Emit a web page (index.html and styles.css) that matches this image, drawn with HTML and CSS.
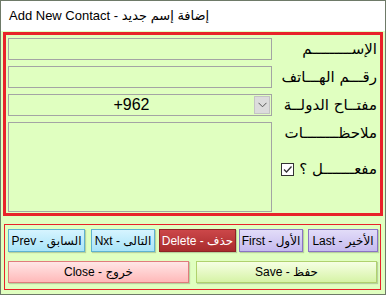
FILE: index.html
```html
<!DOCTYPE html>
<html lang="ar">
<head>
<meta charset="utf-8">
<link rel="stylesheet" href="styles.css">
</head>
<body>
<div class="window">
  <div class="titlebar">Add New Contact - إضافة إسم جديد</div>
  <div class="content">
    <div class="frame">
      <div class="field"><div class="input"></div></div>
      <div class="label">الإســـــــــم</div>

      <div class="field"><div class="input"></div></div>
      <div class="label">رقـــم الهـــاتف</div>

      <div class="field">
        <div class="input select">
          <span class="select-value">+962</span>
          <span class="select-arrow">
            <svg width="9" height="6" viewBox="0 0 9 6"><path d="M0.5 0.8 L4.5 4.8 L8.5 0.8" fill="none" stroke="#555" stroke-width="1"/></svg>
          </span>
        </div>
      </div>
      <div class="label">مفتــاح الدولــة</div>

      <div class="field"><div class="input textarea"></div></div>
      <div class="label-stack">
        <div class="label">ملاحظــــــــات</div>
        <div class="label check-row">
          <span>مفعـــــــل ؟</span>
          <span class="checkbox">
            <svg width="11" height="11" viewBox="0 0 11 11"><path d="M2 5.5 L4.5 8 L9.5 2.5" fill="none" stroke="#333" stroke-width="1.3"/></svg>
          </span>
        </div>
      </div>
    </div>

    <div class="buttons">
      <div class="btn-row">
        <div class="btn blue w-prev">Prev - السابق</div>
        <div class="btn blue w-nxt">Nxt - التالى</div>
        <div class="btn red w-del">Delete - حذف</div>
        <div class="btn purple w-first">First - الأول</div>
        <div class="btn purple w-last">Last - الأخير</div>
      </div>
      <div class="btn-row row2">
        <div class="btn pink w-close">Close - خروج</div>
        <div class="btn green w-save">Save - حفظ</div>
      </div>
    </div>
  </div>
</div>
</body>
</html>
```
FILE: styles.css
```css
* { box-sizing: border-box; }
html, body { margin: 0; padding: 0; }
body {
  width: 386px;
  height: 295px;
  overflow: hidden;
  font-family: "DejaVu Sans", "Liberation Sans", sans-serif;
}
.window {
  width: 386px;
  height: 295px;
  border: 1px solid #6e7a68;
  background: #e0ffc0;
  display: flex;
  flex-direction: column;
}
.titlebar {
  height: 30px;
  background: #ffffff;
  font-family: "Liberation Sans", "DejaVu Sans", sans-serif;
  font-size: 13px;
  color: #000;
  padding-left: 8px;
  line-height: 30px;
  direction: ltr;
}
.content {
  flex: 1;
  display: flex;
  flex-direction: column;
  padding: 1px 1px 0 2px;
}
.frame {
  width: 380px;
  height: 184px;
  border: 3px solid #e8222a;
  padding: 3px 3px 0 2px;
  display: grid;
  grid-template-columns: 264px 1fr;
  grid-template-rows: 22px 22px 22px 90px;
  row-gap: 6px;
  direction: ltr;
}
.field { display: flex; }
.input {
  width: 264px;
  height: 100%;
  border: 1px solid #a4a4a4;
  background: #e0ffc0;
}
.select {
  display: flex;
  align-items: stretch;
  position: relative;
}
.select-value {
  flex: 1;
  text-align: center;
  font-family: "Liberation Sans", sans-serif;
  font-size: 16px;
  line-height: 20px;
  color: #000;
  padding-left: 1px;
}
.select-arrow {
  width: 16px;
  margin: 1px;
  background: #dcdcdc;
  border: 1px solid #c4c4c4;
  display: flex;
  align-items: center;
  justify-content: center;
}
.label {
  direction: rtl;
  text-align: right;
  font-size: 15px;
  line-height: 22px;
  height: 22px;
  color: #000;
  white-space: nowrap;
  overflow: visible;
}
.label-stack {
  display: flex;
  flex-direction: column;
}
.check-row {
  margin-top: 14px;
  display: flex;
  align-items: center;
  gap: 5px;
  justify-content: flex-start;
}
.checkbox {
  width: 13px;
  height: 13px;
  border: 1px solid #333;
  background: #fff;
  display: flex;
  align-items: center;
  justify-content: center;
}
.buttons {
  margin-top: 8px;
  margin-left: 1px;
  width: 377px;
  height: 66px;
  border: 1px solid #e8222a;
  padding: 4px 0 0 3px;
  display: flex;
  flex-direction: column;
  row-gap: 9px;
}
.btn-row {
  display: flex;
  height: 23px;
}
.row2 { height: 22px; }
.btn {
  height: 100%;
  border: 1px solid;
  font-family: "Liberation Sans", "DejaVu Sans", sans-serif;
  font-size: 12px;
  display: flex;
  align-items: center;
  justify-content: center;
  white-space: nowrap;
  box-shadow: 1px 1px 1px rgba(0,0,0,0.18);
  direction: ltr;
  color: #000;
}
.blue {
  background: linear-gradient(#d6f4ff, #a9e4f8);
  border-color: #5fb2d0;
}
.red {
  background: linear-gradient(#cc4749, #a82b2d);
  border-color: #8e2224;
  color: #fff;
}
.purple {
  background: linear-gradient(#e2dcf8, #c6bbef);
  border-color: #8a74c4;
}
.pink {
  background: linear-gradient(#ffe6e6, #ffb9b9);
  border-color: #e07c7c;
}
.green {
  background: linear-gradient(#f6ffe4, #d6f3a6);
  border-color: #b0d26e;
}
.w-prev { width: 77px; margin-right: 6px; }
.w-nxt { width: 64px; margin-right: 4px; }
.w-del { width: 77px; margin-right: 3px; }
.w-first { width: 64px; margin-right: 5px; }
.w-last { width: 70px; }
.w-close { width: 181px; margin-right: 7px; }
.w-save { width: 181px; }
```
